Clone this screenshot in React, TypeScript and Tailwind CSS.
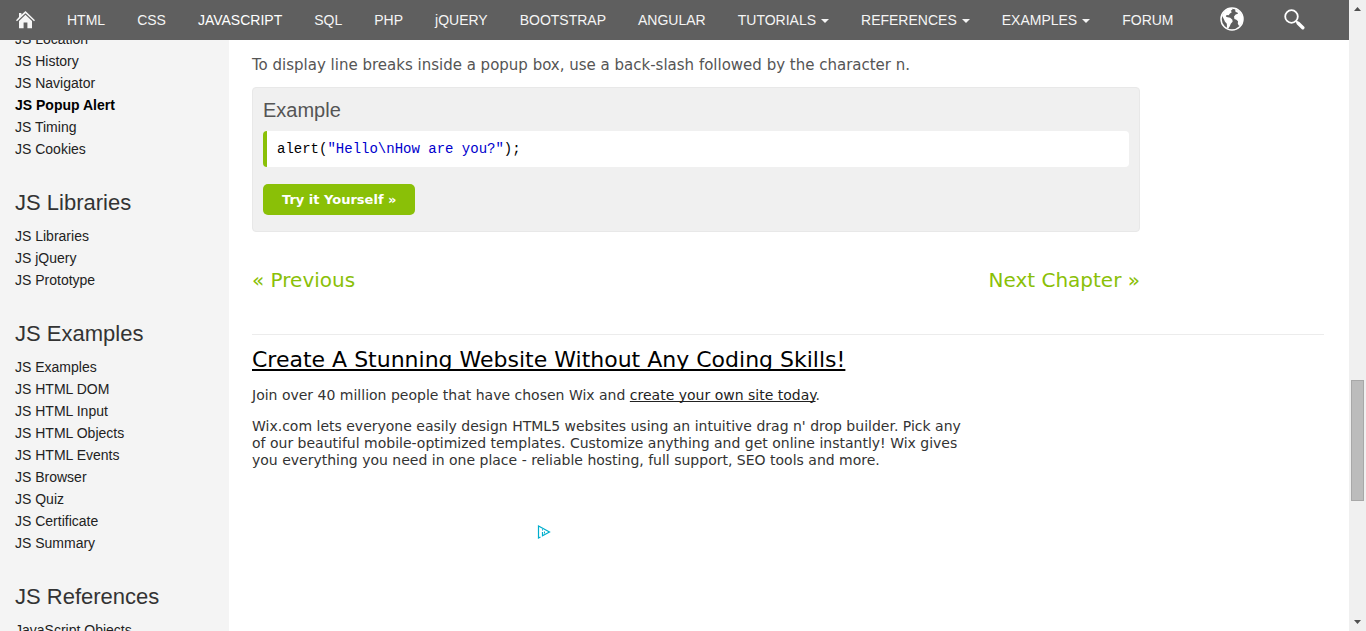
import type { ReactNode } from "react";

type NavItem = { label: string; menu?: boolean; active?: boolean };

const navItems: NavItem[] = [
  { label: "HTML" },
  { label: "CSS" },
  { label: "JAVASCRIPT", active: true },
  { label: "SQL" },
  { label: "PHP" },
  { label: "jQUERY" },
  { label: "BOOTSTRAP" },
  { label: "ANGULAR" },
  { label: "TUTORIALS", menu: true },
  { label: "REFERENCES", menu: true },
  { label: "EXAMPLES", menu: true },
  { label: "FORUM" },
];

type Section = { title?: string; links: string[] };

const sections: Section[] = [
  { links: ["JS Location", "JS History", "JS Navigator", "JS Popup Alert", "JS Timing", "JS Cookies"] },
  { title: "JS Libraries", links: ["JS Libraries", "JS jQuery", "JS Prototype"] },
  {
    title: "JS Examples",
    links: [
      "JS Examples",
      "JS HTML DOM",
      "JS HTML Input",
      "JS HTML Objects",
      "JS HTML Events",
      "JS Browser",
      "JS Quiz",
      "JS Certificate",
      "JS Summary",
    ],
  },
  { title: "JS References", links: ["JavaScript Objects"] },
];

const currentPage = "JS Popup Alert";

function HomeIcon() {
  return (
    <svg viewBox="0 0 19 18" className="h-[18px] w-[19px]" aria-hidden="true">
      <path d="M9.5 0 19 9.2l-1 1.1-8.500-8-8.500 8-1-1.100L3 6V2h2.400v1.800z" fill="#f5f5f5" />
      <path d="M9.500 3.800 16 10v7.200h-4.600v-5.600H7.600v5.600H3V10z" fill="#f5f5f5" />
    </svg>
  );
}

function GlobeIcon() {
  return (
    <svg viewBox="0 0 24 24" className="size-6" aria-hidden="true">
      <circle cx="12" cy="12" r="11" fill="none" stroke="#fff" strokeWidth="1.500" />
      <path
        d="M2 8.500 4.500 4.500 8 2l4-.8.5 1.300-1.700 1.300 1 1.400-1.800 1.200-1.400 1.800-2-.3-.8 1.600 1.800.8 2.600.4 2.200 2 .2 2-1.800 2-1 2.600-1.600 2.400-1.200-1-.2-4-1.800-2L4 12.500z"
        fill="#fff"
      />
      <path
        d="m15 2 4 2 2.600 3.600L23 12l-1.400 4.800-2.400 2.400-1.400-2.400.2-2.600-1.600-1.400-2-.8-.4-2.400 1.600-2 2.400-.8-.6-1.400-1.800-.4z"
        fill="#fff"
      />
    </svg>
  );
}

function SearchIcon() {
  return (
    <svg viewBox="0 0 21 21" className="size-[21px]" aria-hidden="true" fill="none" stroke="#fff">
      <circle cx="7.500" cy="7.500" r="6.300" strokeWidth="1.800" />
      <path d="m12 12 2 2" strokeWidth="2" />
      <path d="m14.200 14.200 4.600 4.600" strokeWidth="3.400" strokeLinecap="round" />
    </svg>
  );
}

function TopBar() {
  return (
    <nav className="flex h-10 shrink-0 items-center bg-[#5f5f5f] text-sm text-[#f5f5f5]">
      <a href="#home" aria-label="Home" className="px-4">
        <HomeIcon />
      </a>
      {navItems.map((item) => (
        <a
          key={item.label}
          href={"#" + item.label.toLowerCase()}
          className={"flex items-center gap-[5px] px-4 leading-10 " + (item.active ? "text-white" : "")}
        >
          {item.label}
          {item.menu && (
            <svg viewBox="0 0 8 4" className="mt-0.5 h-1 w-2" aria-hidden="true">
              <path d="M0 0h8L4 4z" fill="currentColor" />
            </svg>
          )}
        </a>
      ))}
      <div className="flex items-center gap-10 pb-0.5 pl-[30px]">
        <button type="button" aria-label="Translate">
          <GlobeIcon />
        </button>
        <button type="button" aria-label="Search">
          <SearchIcon />
        </button>
      </div>
    </nav>
  );
}

function Sidebar() {
  return (
    <aside className="w-[229px] shrink-0 overflow-hidden bg-[#f4f4f4] px-[15px] text-sm leading-[22px] text-[#222]">
      <div className="-mt-3">
        {sections.map((section, index) => (
          <section key={index} className="mb-[29px]">
            {section.title && (
              <h2 className="mb-2 text-[22px] leading-7 text-[#333]">{section.title}</h2>
            )}
            <ul>
              {section.links.map((link) => (
                <li key={link}>
                  <a href="#page" className={link === currentPage ? "font-bold text-black" : ""}>
                    {link}
                  </a>
                </li>
              ))}
            </ul>
          </section>
        ))}
      </div>
    </aside>
  );
}

function Example({ children }: { children: ReactNode }) {
  return (
    <section className="mt-2.5 rounded border border-[#e8e8e8] bg-[#f0f0f0] px-2.5 pb-4 pt-2">
      <h2 className="font-['Liberation_Sans',sans-serif] text-xl leading-7 text-[#555]">Example</h2>
      <pre className="mt-[7px] rounded border-l-4 border-[#8ac007] bg-white px-2.5 font-['Liberation_Mono',monospace] text-sm leading-9 text-black">
        {children}
      </pre>
      <a
        href="#try"
        className="mt-[17px] inline-block rounded-[5px] bg-[#8ac007] px-[19px] text-[13px] font-bold leading-[31px] text-white"
      >
        Try it Yourself »
      </a>
    </section>
  );
}

function Advert() {
  return (
    <section className="border-t border-[#ececec] pt-[11px] text-sm leading-[17px] text-[#333]">
      <h2 className="text-[22px] leading-7 text-black">
        <a href="#wix" className="underline decoration-2 underline-offset-2 [text-decoration-skip-ink:none]">
          Create A Stunning Website Without Any Coding Skills!
        </a>
      </h2>
      <p className="mt-[13px]">
        Join over 40 million people that have chosen Wix and{" "}
        <a href="#wix" className="text-[#222] underline [text-decoration-skip-ink:none]">
          create your own site today
        </a>
        .
      </p>
      <p className="mt-3.5 max-w-[720px]">
        Wix.com lets everyone easily design HTML5 websites using an intuitive drag n' drop builder. Pick any of our
        beautiful mobile-optimized templates. Customize anything and get online instantly! Wix gives you everything you
        need in one place - reliable hosting, full support, SEO tools and more.
      </p>
      <div className="mt-14 flex max-w-[720px] pl-[285px]">
        <a href="#adchoices" aria-label="AdChoices">
          <svg viewBox="0 0 14 14" className="size-3.5" aria-hidden="true" fill="none" stroke="#00aecd">
            <path d="M3.500 12 1.500 13V1L12.500 7 5.500 10.800V7" strokeWidth="1.200" />
            <path d="M5.500 4.200v1.300M7.500 6.500v2" strokeWidth="1" />
          </svg>
        </a>
      </div>
    </section>
  );
}

function Scrollbar() {
  return (
    <div aria-hidden="true" className="flex w-[17px] shrink-0 flex-col items-center bg-[#f0f0f0] py-[7px]">
      <svg viewBox="0 0 7 4" className="h-1 w-[7px]">
        <path d="M3.500 0 7 4H0z" fill="#505050" />
      </svg>
      <div className="flex w-full grow flex-col items-center">
        <div className="grow-[369]" />
        <div className="h-[121px] w-[13px] border border-[#a8a8a8] bg-[#bcbcbc]" />
        <div className="grow-[119]" />
      </div>
      <svg viewBox="0 0 7 4" className="h-1 w-[7px]">
        <path d="M0 0h7L3.500 4z" fill="#505050" />
      </svg>
    </div>
  );
}

export default function App() {
  return (
    <div className="flex h-screen overflow-hidden bg-white font-['Liberation_Sans',Arial,sans-serif]">
      <div className="flex min-w-0 grow flex-col">
        <TopBar />
        <div className="flex min-h-0 grow">
          <Sidebar />
          <main className="min-w-0 grow pl-[23px] pr-[25px] pt-3.5 font-['DejaVu_Sans',Verdana,sans-serif]">
            <div className="mr-[184px]">
              <p className="text-[15px] leading-[23px] text-[#555]">
                To display line breaks inside a popup box, use a back-slash followed by the character n.
              </p>
              <Example>
                alert(<span className="text-[#0000cd]">"Hello\nHow are you?"</span>);
              </Example>
              <div className="flex justify-between pb-10 pt-[34px] text-xl leading-7 text-[#8ac007]">
                <a href="#previous">« Previous</a>
                <a href="#next">Next Chapter »</a>
              </div>
            </div>
            <Advert />
          </main>
        </div>
      </div>
      <Scrollbar />
    </div>
  );
}
